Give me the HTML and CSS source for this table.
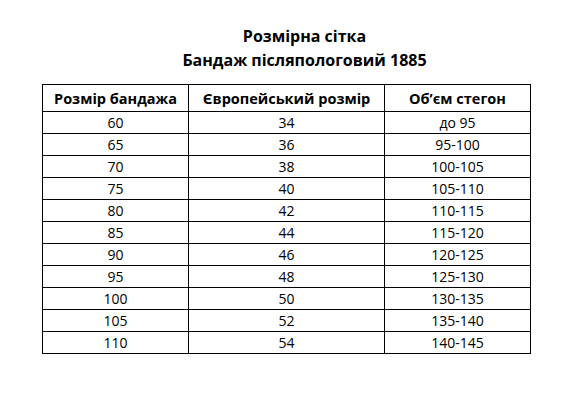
FILE: index.html
```html
<!DOCTYPE html>
<html lang="uk">
<head>
<meta charset="utf-8">
<title>Розмірна сітка</title>
<link rel="stylesheet" href="styles.css">
</head>
<body>
<div class="page">
  <div class="title">
    <div class="title-line">Розмірна сітка</div>
    <div class="title-line">Бандаж післяпологовий 1885</div>
  </div>
  <table class="sizes">
    <thead>
      <tr><th class="c1">Розмір бандажа</th><th class="c2">Європейський розмір</th><th class="c3">Об’єм стегон</th></tr>
    </thead>
    <tbody>
      <tr><td>60</td><td>34</td><td>до 95</td></tr>
      <tr><td>65</td><td>36</td><td>95-100</td></tr>
      <tr><td>70</td><td>38</td><td>100-105</td></tr>
      <tr><td>75</td><td>40</td><td>105-110</td></tr>
      <tr><td>80</td><td>42</td><td>110-115</td></tr>
      <tr><td>85</td><td>44</td><td>115-120</td></tr>
      <tr><td>90</td><td>46</td><td>120-125</td></tr>
      <tr><td>95</td><td>48</td><td>125-130</td></tr>
      <tr><td>100</td><td>50</td><td>130-135</td></tr>
      <tr><td>105</td><td>52</td><td>135-140</td></tr>
      <tr><td>110</td><td>54</td><td>140-145</td></tr>
    </tbody>
  </table>
</div>
</body>
</html>
```
FILE: styles.css
```css
html, body {
  margin: 0;
  padding: 0;
  background: #ffffff;
}
body {
  font-family: "Open Sans", "Noto Sans", sans-serif;
  color: #000000;
}
.page {
  width: 579px;
  height: 403px;
  padding-top: 24px;
  box-sizing: border-box;
}
.title {
  padding-left: 30px;
  text-align: center;
  font-weight: 700;
  font-size: 16px;
  line-height: 24px;
}
.sizes {
  margin-left: 42px;
  margin-top: 12px;
  border-collapse: collapse;
  width: 486px;
  table-layout: fixed;
}
.sizes th, .sizes td {
  border: 1px solid #000000;
  text-align: center;
  padding: 0;
}
.sizes th {
  font-weight: 700;
  font-size: 14.5px;
  height: 26px;
}
.sizes td {
  font-weight: 400;
  font-size: 14px;
  height: 21px;
}
.c1 { width: 145px; }
.c2 { width: 195px; }
.c3 { width: 145px; }
```
